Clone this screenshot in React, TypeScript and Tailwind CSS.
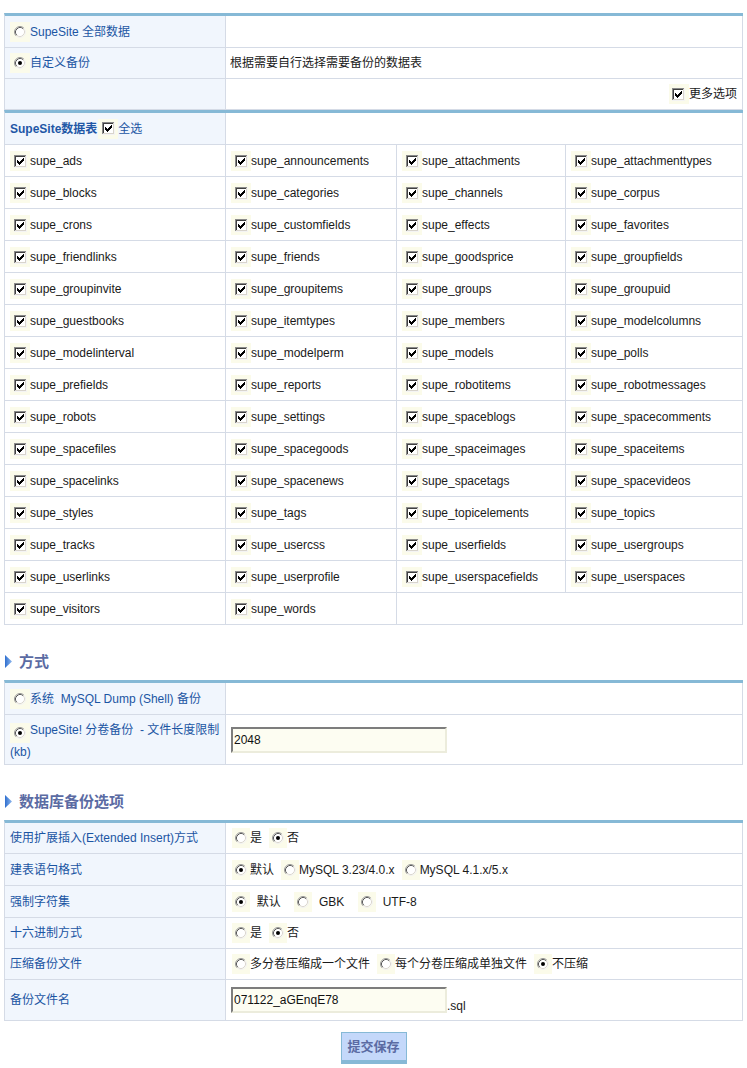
import React from "react";

const tableNames: string[][] = [
  ["supe_ads", "supe_announcements", "supe_attachments", "supe_attachmenttypes"],
  ["supe_blocks", "supe_categories", "supe_channels", "supe_corpus"],
  ["supe_crons", "supe_customfields", "supe_effects", "supe_favorites"],
  ["supe_friendlinks", "supe_friends", "supe_goodsprice", "supe_groupfields"],
  ["supe_groupinvite", "supe_groupitems", "supe_groups", "supe_groupuid"],
  ["supe_guestbooks", "supe_itemtypes", "supe_members", "supe_modelcolumns"],
  ["supe_modelinterval", "supe_modelperm", "supe_models", "supe_polls"],
  ["supe_prefields", "supe_reports", "supe_robotitems", "supe_robotmessages"],
  ["supe_robots", "supe_settings", "supe_spaceblogs", "supe_spacecomments"],
  ["supe_spacefiles", "supe_spacegoods", "supe_spaceimages", "supe_spaceitems"],
  ["supe_spacelinks", "supe_spacenews", "supe_spacetags", "supe_spacevideos"],
  ["supe_styles", "supe_tags", "supe_topicelements", "supe_topics"],
  ["supe_tracks", "supe_usercss", "supe_userfields", "supe_usergroups"],
  ["supe_userlinks", "supe_userprofile", "supe_userspacefields", "supe_userspaces"],
  ["supe_visitors", "supe_words"],
];

// classic win98 style checkbox
const Check = () => (
  <span className="inline-flex h-[20px] w-[20px] shrink-0 items-center justify-center bg-[#fbfbea]">
    <svg width="13" height="13" viewBox="0 0 13 13" shapeRendering="crispEdges">
      <rect x="0" y="0" width="13" height="13" fill="#fff" />
      <path d="M0 0.5H12.5M0.5 0V12.5" stroke="#8a8a8a" fill="none" />
      <path d="M1 1.5H11.5M1.5 1V11.5" stroke="#404040" fill="none" />
      <path d="M1 11.5H12M11.5 1V12" stroke="#d8d4cc" fill="none" />
      <path d="M0 12.5H13M12.5 0V13" stroke="#f4f4f4" fill="none" />
      <rect x="3" y="5" width="1" height="3" fill="#000" />
      <rect x="4" y="6" width="1" height="3" fill="#000" />
      <rect x="5" y="7" width="1" height="3" fill="#000" />
      <rect x="6" y="6" width="1" height="3" fill="#000" />
      <rect x="7" y="5" width="1" height="3" fill="#000" />
      <rect x="8" y="4" width="1" height="3" fill="#000" />
      <rect x="9" y="3" width="1" height="3" fill="#000" />
    </svg>
  </span>
);

const Radio = ({ checked = false, narrow = false }: { checked?: boolean; narrow?: boolean }) => (
  <span
    className={
      narrow
        ? "inline-flex h-[20px] w-[18px] shrink-0 items-center justify-center bg-[#fbfbea]"
        : "inline-flex h-[20px] w-[20px] shrink-0 items-center justify-center bg-[#fbfbea]"
    }
  >
    <svg width="12" height="12" viewBox="0 0 12 12">
      <circle cx="6" cy="6" r="5" fill="#fff" />
      <path d="M2.11 9.89A5.5 5.5 0 0 1 9.89 2.11" stroke="#9a9a9a" fill="none" />
      <path d="M9.89 2.11A5.5 5.5 0 0 1 2.11 9.89" stroke="#f2f2f2" fill="none" />
      <path d="M2.82 9.18A4.5 4.5 0 0 1 9.18 2.82" stroke="#5a5a5a" fill="none" />
      <path d="M9.18 2.82A4.5 4.5 0 0 1 2.82 9.18" stroke="#dcd8d0" fill="none" />
      {checked && <circle cx="6" cy="6" r="2" fill="#000" />}
    </svg>
  </span>
);

const Option = ({ checked = false, children }: { checked?: boolean; children: React.ReactNode }) => (
  <span className="mr-[7px] flex items-center whitespace-pre">
    <Radio narrow checked={checked} />
    {children}
  </span>
);

const SectionTitle = ({ title }: { title: string }) => (
  <div className="flex h-[55px] items-center gap-[7px] pl-[1px] pt-[18px]">
    <svg width="7" height="13" viewBox="0 0 7 13">
      <defs>
        <linearGradient id={"g" + title.length} x1="0" y1="0" x2="1" y2="0">
          <stop offset="0" stopColor="#2f6fcf" />
          <stop offset="1" stopColor="#8fb8ee" />
        </linearGradient>
      </defs>
      <path d="M0 0L7 6.5L0 13Z" fill={"url(#g" + title.length + ")"} />
    </svg>
    <span className="text-[15px] font-bold leading-[17px] text-[#5b6ba3]">{title}</span>
  </div>
);

const TextBox = ({ value }: { value: string }) => (
  <input
    type="text"
    readOnly
    defaultValue={value}
    className="h-[26px] w-[216px] border-2 border-t-[#7d7d7d] border-l-[#7d7d7d] border-b-[#ececdc] border-r-[#ececdc] bg-[#fdfdf2] px-[1px] font-['Liberation_Sans','Noto_Sans_CJK_SC',sans-serif] text-[12px] text-[#111] outline-none"
  />
);

export default function App() {
  return (
    <div className="min-h-[1068px] w-[747px] bg-white pl-[4px] pt-[13px] font-['Liberation_Sans','Noto_Sans_CJK_SC',sans-serif] text-[12px] text-[#1a1a1a]">
      {/* choose data */}
      <table className="w-[739px] table-fixed border-separate border-spacing-0 border-l border-t-[3px] border-l-[#d5dbe6] border-t-[#86b9d6]">
        <colgroup>
          <col className="w-[221px]" />
          <col />
        </colgroup>
        <tbody>
          <tr>
            <td className="h-[32px] border-b border-r border-[#d5dbe6] bg-[#f1f6fd] px-[5px]">
              <span className="flex items-center text-[#1b55a3]">
                <Radio />
                SupeSite 全部数据
              </span>
            </td>
            <td className="border-b border-r border-[#d5dbe6] px-[4px]"></td>
          </tr>
          <tr>
            <td className="h-[31px] border-b border-r border-[#d5dbe6] bg-[#f1f6fd] px-[5px]">
              <span className="flex items-center text-[#1b55a3]">
                <Radio checked />
                自定义备份
              </span>
            </td>
            <td className="border-b border-r border-[#d5dbe6] px-[4px]">根据需要自行选择需要备份的数据表</td>
          </tr>
          <tr>
            <td className="h-[31px] border-b border-r border-[#d5dbe6] bg-[#f1f6fd] px-[5px]"></td>
            <td className="border-b border-r border-[#d5dbe6] px-[5px]">
              <span className="flex items-center justify-end">
                <Check />
                更多选项
              </span>
            </td>
          </tr>
        </tbody>
      </table>

      {/* table list */}
      <table className="w-[739px] table-fixed border-separate border-spacing-0 border-l border-t-[3px] border-l-[#d5dbe6] border-t-[#86b9d6]">
        <colgroup>
          <col className="w-[221px]" />
          <col className="w-[171px]" />
          <col className="w-[169px]" />
          <col />
        </colgroup>
        <tbody>
          <tr>
            <td className="h-[32px] border-b border-r border-[#d5dbe6] bg-[#f1f6fd] px-[5px]">
              <span className="flex items-center text-[#1b55a3]">
                <b className="pr-[1px] text-[#1f57a6]">SupeSite数据表</b>
                <Check />
                全选
              </span>
            </td>
            <td colSpan={3} className="border-b border-r border-[#d5dbe6]"></td>
          </tr>
          {tableNames.map((row, i) => (
            <tr key={i}>
              {row.map((name) => (
                <td key={name} className="h-[32px] border-b border-r border-[#d5dbe6] px-[5px] pt-[1px]">
                  <span className="flex items-center">
                    <Check />
                    {name}
                  </span>
                </td>
              ))}
              {row.length < 4 && <td colSpan={4 - row.length} className="border-b border-r border-[#d5dbe6]"></td>}
            </tr>
          ))}
        </tbody>
      </table>

      <SectionTitle title="方式" />
      <table className="w-[739px] table-fixed border-separate border-spacing-0 border-l border-t-[3px] border-l-[#d5dbe6] border-t-[#86b9d6]">
        <colgroup>
          <col className="w-[221px]" />
          <col />
        </colgroup>
        <tbody>
          <tr>
            <td className="h-[32px] border-b border-r border-[#d5dbe6] bg-[#f1f6fd] px-[5px]">
              <span className="flex items-center text-[#1b55a3]">
                <Radio />
                系统&nbsp; MySQL Dump (Shell) 备份
              </span>
            </td>
            <td className="border-b border-r border-[#d5dbe6]"></td>
          </tr>
          <tr>
            <td className="h-[50px] border-b border-r border-[#d5dbe6] bg-[#f1f6fd] px-[5px] pt-[3px] leading-[18px] text-[#1b55a3]">
              <span className="whitespace-nowrap">
                <span className="inline-flex align-[-5px]">
                  <Radio checked />
                </span>
                SupeSite! 分卷备份&nbsp; - 文件长度限制
              </span>
              <br />
              (kb)
            </td>
            <td className="border-b border-r border-[#d5dbe6] px-[5px]">
              <TextBox value="2048" />
            </td>
          </tr>
        </tbody>
      </table>

      <SectionTitle title="数据库备份选项" />
      <table className="w-[739px] table-fixed border-separate border-spacing-0 border-l border-t-[3px] border-l-[#d5dbe6] border-t-[#86b9d6]">
        <colgroup>
          <col className="w-[221px]" />
          <col />
        </colgroup>
        <tbody>
          <tr>
            <td className="h-[31px] border-b border-r border-[#d5dbe6] bg-[#f1f6fd] px-[5px] text-[#1b55a3]">使用扩展插入(Extended Insert)方式</td>
            <td className="border-b border-r border-[#d5dbe6] px-[6px]">
              <span className="flex items-center">
                <Option>是</Option>
                <Option checked>否</Option>
              </span>
            </td>
          </tr>
          <tr>
            <td className="h-[32px] border-b border-r border-[#d5dbe6] bg-[#f1f6fd] px-[5px] text-[#1b55a3]">建表语句格式</td>
            <td className="border-b border-r border-[#d5dbe6] px-[6px]">
              <span className="flex items-center">
                <Option checked>默认</Option>
                <Option>MySQL 3.23/4.0.x</Option>
                <Option>MySQL 4.1.x/5.x</Option>
              </span>
            </td>
          </tr>
          <tr>
            <td className="h-[32px] border-b border-r border-[#d5dbe6] bg-[#f1f6fd] px-[5px] text-[#1b55a3]">强制字符集</td>
            <td className="border-b border-r border-[#d5dbe6] px-[6px]">
              <span className="flex items-center">
                <Option checked>{"  默认  "}</Option>
                <Option>{"  GBK  "}</Option>
                <Option>{"  UTF-8"}</Option>
              </span>
            </td>
          </tr>
          <tr>
            <td className="h-[31px] border-b border-r border-[#d5dbe6] bg-[#f1f6fd] px-[5px] text-[#1b55a3]">十六进制方式</td>
            <td className="border-b border-r border-[#d5dbe6] px-[6px]">
              <span className="flex items-center">
                <Option>是</Option>
                <Option checked>否</Option>
              </span>
            </td>
          </tr>
          <tr>
            <td className="h-[31px] border-b border-r border-[#d5dbe6] bg-[#f1f6fd] px-[5px] text-[#1b55a3]">压缩备份文件</td>
            <td className="border-b border-r border-[#d5dbe6] px-[6px]">
              <span className="flex items-center">
                <Option>多分卷压缩成一个文件</Option>
                <Option>每个分卷压缩成单独文件</Option>
                <Option checked>不压缩</Option>
              </span>
            </td>
          </tr>
          <tr>
            <td className="h-[41px] border-b border-r border-[#d5dbe6] bg-[#f1f6fd] px-[5px] text-[#1b55a3]">备份文件名</td>
            <td className="border-b border-r border-[#d5dbe6] px-[5px]">
              <span className="flex items-end">
                <TextBox value="071122_aGEnqE78" />
                <span className="leading-[14px]">.sql</span>
              </span>
            </td>
          </tr>
        </tbody>
      </table>

      <div className="flex w-[739px] justify-center pt-[11px]">
        <button
          type="button"
          className="h-[32px] w-[66px] border border-b-4 border-[#86b9d6] bg-[#c4d8fa] font-['Liberation_Sans','Noto_Sans_CJK_SC',sans-serif] text-[13px] font-bold text-[#5b6ba3]"
        >
          提交保存
        </button>
      </div>
    </div>
  );
}
